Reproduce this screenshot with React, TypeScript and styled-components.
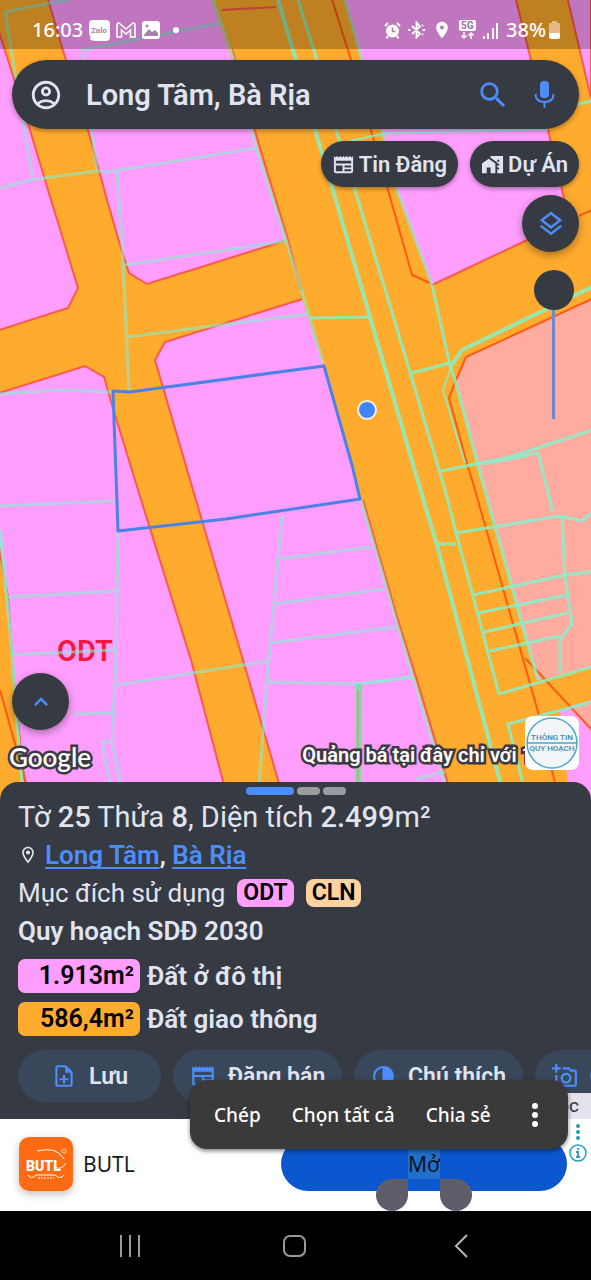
import React from "react";
import styled, { createGlobalStyle } from "styled-components";
import {
  MdContrast,
  MdKeyboardArrowUp,
  MdLocationOn,
  MdMapsHomeWork,
  MdNewspaper,
  MdOutlineAccountCircle,
  MdOutlineAddAPhoto,
  MdOutlineLayers,
  MdOutlineLocationOn,
  MdOutlineNoteAdd,
  MdSearch,
} from "react-icons/md";

const colors = {
  surface: "#363a43",
  text: "#e0e4f1",
  blue: "#4c8dfb",
  pink: "#ff9eff",
  orange: "#ffab2e",
  salmon: "#ffaba0",
  peach: "#ffd3a1",
  edge: "#fc5a4a",
};

const GlobalStyle = createGlobalStyle`
  *, *::before, *::after { box-sizing: border-box; }
  body { margin: 0; background: #000; font-family: Roboto, "Noto Sans", sans-serif; }
  button, input { font: inherit; color: inherit; border: 0; padding: 0; background: none; }
  p, h1, h2, ul { margin: 0; padding: 0; font-size: inherit; font-weight: inherit; }
  svg { display: block; flex: none; }
`;

const Page = styled.div`
  min-height: 100vh;
  display: flex;
  flex-direction: column;
  overflow: hidden;
`;

/* ---------- map ---------- */

const MapArea = styled.main`
  position: relative;
  flex: 1;
  min-height: 640px;
  display: flex;
  flex-direction: column;
  padding-bottom: 26px;
  background: ${colors.pink};
`;

const MapCanvas = styled.svg`
  position: absolute;
  inset: 0;
  width: 100%;
  height: 100%;
`;

const StatusBar = styled.div`
  position: relative;
  height: 49px;
  padding: 12px 31px 0 32px;
  display: flex;
  justify-content: space-between;
  align-items: flex-start;
  background: rgba(0, 0, 0, 0.25);
  color: #fff;
  font-family: "Noto Sans", sans-serif;
  font-size: 20px;
  font-weight: 500;
  line-height: 36px;
`;

const StatusGroup = styled.div<{ $gap: number }>`
  display: flex;
  align-items: center;
  gap: ${(p) => p.$gap}px;
  height: 36px;
`;

const SearchBar = styled.form`
  position: relative;
  display: flex;
  align-items: center;
  height: 69px;
  margin: 11px 12px 0;
  padding: 0 17px;
  border-radius: 35px;
  background: ${colors.surface};
  color: ${colors.text};
  box-shadow: 0 2px 5px rgba(0, 0, 0, 0.35);
`;

const SearchInput = styled.input`
  flex: 1;
  min-width: 0;
  margin-left: 23px;
  font-size: 29px;
  font-weight: 600;
  outline: none;
`;

const IconButton = styled.button<{ $accent?: boolean }>`
  display: flex;
  margin-left: ${(p) => (p.$accent ? 18 : 0)}px;
  color: ${(p) => (p.$accent ? colors.blue : colors.text)};
`;

const Chips = styled.div`
  position: relative;
  display: flex;
  justify-content: flex-end;
  gap: 12px;
  margin: 12px 12px 0;
`;

const Chip = styled.button`
  display: flex;
  align-items: center;
  gap: 4px;
  height: 46px;
  padding: 0 11px;
  border-radius: 23px;
  background: ${colors.surface};
  color: ${colors.text};
  font-size: 22px;
  font-weight: 600;
  box-shadow: 0 2px 4px rgba(0, 0, 0, 0.35);
`;

const MapTools = styled.div`
  position: relative;
  align-self: flex-end;
  display: flex;
  flex-direction: column;
  align-items: flex-end;
  gap: 18px;
  margin: 8px 12px 0;
`;

const RoundButton = styled.button`
  display: grid;
  place-items: center;
  width: 57px;
  height: 57px;
  border-radius: 50%;
  background: ${colors.surface};
  color: ${colors.blue};
  box-shadow: 0 3px 8px rgba(0, 0, 0, 0.35);
`;

const OpacitySlider = styled.input`
  appearance: none;
  writing-mode: vertical-lr;
  direction: rtl;
  width: 40px;
  height: 149px;
  margin: 0 6px 0 0;

  &::-webkit-slider-runnable-track {
    width: 3px;
    height: 100%;
    margin: 0 auto;
    background: #6f86d3;
  }
  &::-webkit-slider-thumb {
    appearance: none;
    width: 40px;
    height: 40px;
    margin-left: -18px;
    border-radius: 50%;
    background: ${colors.surface};
  }
`;

const MapFooter = styled.div`
  position: relative;
  display: flex;
  justify-content: space-between;
  align-items: flex-end;
  margin-top: auto;
  padding: 0 12px 0 9px;
`;

const FooterLeft = styled.div`
  display: flex;
  flex-direction: column;
  align-items: flex-start;
  gap: 10px;

  ${RoundButton} {
    margin-left: 3px;
  }
`;

const FooterRight = styled.div`
  display: flex;
  align-items: center;
  margin-bottom: 2px;
`;

const OutlinedText = styled.span<{ $size: number; $weight: number; $family: string }>`
  color: #fff;
  font-family: ${(p) => p.$family}, sans-serif;
  font-size: ${(p) => p.$size}px;
  font-weight: ${(p) => p.$weight};
  line-height: 34px;
  white-space: nowrap;
  -webkit-text-stroke: 5px #3c3a42;
  paint-order: stroke fill;
`;

const Promo = styled.div`
  margin: 24px -8px 0 0;
`;

const Badge = styled.div`
  position: relative;
  width: 54px;
  height: 54px;
  border-radius: 8px;
  background: #fff;
`;

/* ---------- parcel sheet ---------- */

const Sheet = styled.section`
  position: relative;
  margin-top: -18px;
  padding: 5px 0 17px;
  border-radius: 18px 18px 0 0;
  background: ${colors.surface};
  color: ${colors.text};
`;

const Pager = styled.div`
  display: flex;
  justify-content: center;
  gap: 3px;
  margin-bottom: 3px;
`;

const PagerBar = styled.span<{ $active?: boolean }>`
  width: ${(p) => (p.$active ? 48 : 23)}px;
  height: 8px;
  border-radius: 4px;
  background: ${(p) => (p.$active ? colors.blue : "#9c9c9e")};
`;

const Line = styled.div<{ $size: number; $bold?: boolean }>`
  display: flex;
  align-items: center;
  height: 38px;
  padding: 0 18px;
  font-size: ${(p) => p.$size}px;
  font-weight: ${(p) => (p.$bold ? 600 : 400)};
  white-space: pre;

  strong { font-weight: 500; }
`;

const Places = styled.span`
  margin-left: 7px;
`;

const PlaceLink = styled.a`
  color: ${colors.blue};
  text-decoration: underline;
  text-decoration-thickness: 2px;
  text-underline-offset: 3px;
  text-decoration-skip-ink: none;
`;

const Tag = styled.span<{ $color: string }>`
  height: 28px;
  margin-left: 12px;
  padding: 0 6px;
  border-radius: 8px;
  background: ${(p) => p.$color};
  color: #000;
  font-size: 23px;
  font-weight: 600;
  line-height: 28px;
`;

const AreaList = styled.ul`
  display: flex;
  flex-direction: column;
  gap: 9px;
  padding: 9px 18px 14px;
  list-style: none;
`;

const AreaItem = styled.li`
  display: flex;
  align-items: center;
  gap: 7px;
  font-size: 26px;
  font-weight: 600;
  line-height: 34px;
`;

const AreaValue = styled.span<{ $color: string }>`
  width: 122px;
  padding-right: 6px;
  border-radius: 7px;
  background: ${(p) => p.$color};
  color: #000;
  font-size: 25px;
  text-align: right;
`;

const Actions = styled.div`
  display: flex;
  gap: 12px;
  padding-left: 18px;
  overflow: hidden;
`;

const ActionButton = styled.button<{ $wide?: boolean }>`
  flex: none;
  display: flex;
  align-items: center;
  justify-content: center;
  gap: 12px;
  width: ${(p) => (p.$wide ? 169 : 143)}px;
  height: 52px;
  border-radius: 26px;
  background: #39475b;
  font-size: 23px;
  font-weight: 600;

  svg { color: ${colors.blue}; }
`;

const HalfDisc = styled(MdContrast)`
  transform: scaleX(-1);
`;

const ReadLabel = styled.span`
  position: absolute;
  right: 0;
  bottom: 0;
  width: 60px;
  height: 26px;
  padding-right: 12px;
  background: #e5e2ee;
  color: #333;
  font-size: 19px;
  line-height: 26px;
  text-align: right;
`;

/* ---------- advert ---------- */

const Ad = styled.aside`
  position: relative;
  display: flex;
  align-items: center;
  height: 92px;
  padding: 0 24px 2px 19px;
  background: #fff;
  color: #1b1b1f;
  font-family: "Noto Sans", sans-serif;
`;

const AdIcon = styled.svg`
  border-radius: 10px;
  box-shadow: 0 3px 8px rgba(0, 0, 0, 0.25);
`;

const AdName = styled.span`
  flex: 1;
  margin-left: 10px;
  font-size: 21px;
`;

const OpenButton = styled.button`
  flex: 0 1 286px;
  height: 54px;
  border-radius: 27px;
  background: #0b57d0;
  color: #10131c;
  font-size: 21px;
`;

const Selection = styled.span`
  position: relative;
  display: inline-block;
  line-height: 30px;
  background: #1f70cc;
`;

const Handle = styled.span<{ $side: "left" | "right" }>`
  position: absolute;
  top: 100%;
  ${(p) => (p.$side === "left" ? "right: 100%" : "left: 100%")};
  width: 32px;
  height: 32px;
  border-radius: ${(p) => (p.$side === "left" ? "50% 0 50% 50%" : "0 50% 50% 50%")};
  background: #5d5d6b;
`;

const AdMarks = styled.div`
  position: absolute;
  top: 4px;
  right: 4px;
  display: flex;
  flex-direction: column;
  align-items: center;
  gap: 3px;
`;

const ContextMenu = styled.div`
  position: absolute;
  right: 23px;
  bottom: 62px;
  display: flex;
  align-items: center;
  width: 378px;
  height: 69px;
  padding: 0 24px;
  border-radius: 17px;
  background: #3a3a3b;
  color: #fff;
  box-shadow: 0 2px 4px rgba(0, 0, 0, 0.5);
`;

const MenuItem = styled.button`
  margin-right: 31px;
  font-size: 19px;
  font-weight: 500;
  white-space: nowrap;
`;

const MenuMore = styled.button`
  margin-left: auto;
`;

/* ---------- system navigation ---------- */

const NavBar = styled.nav`
  position: relative;
  display: grid;
  grid-template-columns: repeat(3, 1fr);
  height: 69px;
  padding: 0 47px;
  background: #000;
`;

const NavButton = styled.button`
  display: grid;
  place-items: center;
`;

const teal = { fill: "none", stroke: "#7df5cf", strokeWidth: 3, strokeOpacity: 0.8 };
const faint = { fill: "none", stroke: "#84efd0", strokeWidth: 3, strokeOpacity: 0.6 };
const red = { fill: "none", stroke: "#ff5a14", strokeWidth: 2 };

function CadastralMap() {
  return (
    <MapCanvas viewBox="0 0 591 800" preserveAspectRatio="xMidYMin slice" role="img" aria-label="Bản đồ quy hoạch">
      <rect width="591" height="800" fill={colors.pink} />
      <g fill={colors.orange} stroke={colors.edge} strokeWidth="2">
        <path d="M-4 -4H47L65 57L88 130L107 200L120 245L129 273L147 284L265 247L290 239L312 296L165 342L155 360L193 490L243 660L285 804H229L191 660L138 490L112 405L104 377L85 366L-4 394V331L68 308L78 288L48 190L30 130L-4 22Z" />
        <path d="M-4 530L8 597L14 680L22 760L28 804H-4Z" />
        <path d="M210 -4L231 57L258 148L286 240L300 293L323 363L361 500L398 627L415 680L453 804H576L591 790V-4H568L592 100V-4Z" stroke="none" />
        <path d="M286 240L300 293" stroke={colors.orange} strokeWidth="4" />
        <path d="M363 500L400 627L417 680L454 804M222 10L276 7M232 49L260 148L288 240L301 290" fill="none" />
      </g>
      <path d="M344 -4L362 60L386 145L397 190L432 285L525 241L560 226L566 206L548 130L531 60L515 -4Z" fill={colors.pink} />
      <path d="M432 285L525 241L560 226L566 206L548 130L531 60L515 -4" fill="none" stroke={colors.edge} strokeWidth="2" />
      <path d="M567 -4L591 98V-4Z" fill={colors.pink} stroke={colors.edge} strokeWidth="2" />
      <path d="M591 299L466 357L456 380L482 480L510 580L525 635L538 680L591 667Z" fill={colors.salmon} />
      <path d="M560 711L591 702V804H570Z" fill={colors.pink} />
      <path d="M569 706L591 700V730Z" fill={colors.salmon} />

      <g {...red}>
        <path d="M331 -4L351 60L388 190L412 275L430 283M579 216L592 210" />
        <path d="M592 299L466 357L456 380L449 398L466 460L475 490L538 712L560 804M525 658L592 730M0 690L28 790" />
      </g>

      <g {...teal}>
        <path d="M278 0L296 60L315 130L333 190L370 317L419 485L437 545L505 800" strokeWidth="4" />
        <path d="M298 0L317 60L336 130L355 190L410 372L445 490L456 532L499 694L592 667" />
        <path d="M592 287L462 350L452 365" strokeWidth="4" />
        <path d="M452 365L443 390L465 463" strokeWidth="2" />
        <path d="M432 285L450 365L455 380L482 480L510 580L525 635L538 680" />
        <path d="M310 318L370 317M437 544H456M441 471L481 463M456 533L560 516L582 521L592 513" />
        <path d="M481 463L510 457L592 430M481 464L510 459L538 453L553 512M412 373L450 363" />
        <path d="M562 516L565 576L572 624L560 640V673" />
        <path d="M473 595L565 575L592 572M478 613L567 595M484 632L568 613M490 651L560 636" />
        <path d="M592 702L508 724L527 800" />
        <path d="M357 684L413 677M578 104L592 101M0 530L10 630L22 782" />
        <path d="M350 141L386 133L548 129" strokeWidth="2" />
      </g>
      <path d="M359 684L358 800" stroke="#7ddcaa" strokeWidth="6" />
      <path d="M358 690V800" stroke="#b9b07a" strokeWidth="2" />

      <text x="57" y="661" fill="#f5173b" fontFamily="Roboto, sans-serif" fontSize="29" fontWeight="600">ODT</text>

      <g {...faint}>
        <path d="M213 0L233 57L257 150L286 240L310 318L323 363M361 500L398 627L413 677L447 790" />
        <path d="M345 0L362 60L386 145L397 190L432 285" />
        <path d="M0 188L30 180L97 171L107 172L258 148M5 12L50 3L70 0M5 12L33 180M82 50L92 130L97 171M82 50L220 23" />
        <path d="M117 172L118 190L122 240L129 392M124 265L286 241M127 337L300 315L308 313M0 394L60 390L113 392" />
        <path d="M0 506L115 501M8 597L115 591M12 655L115 650M117 685L268 661M73 714L113 713" />
        <path d="M118 531L116 660L112 742L124 800M102 742H112M102 742L113 800" />
        <path d="M282 515L267 680L258 800M278 559L371 547M274 604L384 589M270 643L396 627M267 682L357 684M415 779L445 772" />
      </g>

      <path
        d="M113 391L130 392L324 366L352 465L360 499L226 519L118 531Z"
        fill="none"
        stroke="#4a82e8"
        strokeWidth="3"
        strokeLinejoin="round"
      />
      <circle cx="367" cy="410" r="9" fill="#4285f4" stroke="#f3efe8" strokeWidth="2" />
    </MapCanvas>
  );
}

function Status() {
  return (
    <StatusBar>
      <StatusGroup $gap={6}>
        <span>16:03</span>
        <svg width="21" height="21" viewBox="0 0 21 21">
          <path d="M4 0H17Q21 0 21 4V17Q21 21 17 21H7Q5 21 1 20Q2 18 1 16Q0 14 0 10V4Q0 0 4 0Z" fill="#fff" />
          <text x="2" y="13" fontFamily="Roboto, sans-serif" fontSize="8" fontWeight="700" fill="#b27bb5">Zalo</text>
        </svg>
        <svg width="20" height="16" viewBox="0 0 20 16" fill="none" stroke="#fff" strokeWidth="1.6">
          <path d="M1 3Q1 1 3 1L10 7L17 1Q19 1 19 3V15H14.500V8L10 12L5.500 8V15H1Z" />
        </svg>
        <svg width="18" height="18" viewBox="0 0 18 18">
          <rect width="18" height="18" rx="3" fill="#fff" />
          <path d="M2 14L7 8L10 11L13 9L16 12V15H2Z" fill="#a681ad" />
          <circle cx="5" cy="5" r="1.500" fill="#a681ad" />
        </svg>
        <svg width="20" height="6" viewBox="0 0 20 6">
          <circle cx="10" cy="3" r="3" fill="#fff" />
        </svg>
      </StatusGroup>
      <StatusGroup $gap={7}>
        <svg width="17" height="17" viewBox="0 0 17 17" fill="none" stroke="#fff">
          <circle cx="8.500" cy="9" r="6.500" fill="#fff" stroke="none" />
          <path d="M1 4L4 1M16 4L13 1M4 14L2.500 16.500M13 14L14.500 16.500" strokeWidth="2" />
          <path d="M8.500 5.500V9.500H11.500" stroke="#a87aa8" strokeWidth="1.500" />
        </svg>
        <svg width="17" height="18" viewBox="0 0 17 18" fill="none" stroke="#fff" strokeWidth="1.800">
          <path d="M4 5L12 12.500L8.500 16.500V1.500L12 5.500L4 13M0 9H2.500M14.500 9H17M14 5L15 4M14 13L15 14" />
        </svg>
        <MdLocationOn size={20} />
        <svg width="17" height="20" viewBox="0 0 17 20">
          <rect width="17" height="11" rx="2" fill="#fff" />
          <text x="2" y="9" fontFamily="Roboto, sans-serif" fontSize="10" fontWeight="700" fill="#9d6f9d">5G</text>
          <path d="M5 12V18M2.500 15.500L5 18L7.500 15.500M12 19V13M9.500 15.500L12 13L14.500 15.500" fill="none" stroke="#fff" strokeWidth="1.500" />
        </svg>
        <svg width="16" height="17" viewBox="0 0 16 17" fill="#fff">
          <path d="M0 14H2V17H0ZM4 11H6V17H4ZM9 6H11V17H9ZM13 1H15V17H13Z" />
        </svg>
        <StatusGroup $gap={3}>
          <span>38%</span>
          <svg width="11" height="18" viewBox="0 0 11 18">
            <path d="M3 0H8V2H10Q11 2 11 3V12H0V3Q0 2 1 2H3Z" fill="#e3b98c" />
            <path d="M0 12H11V16Q11 18 9 18H2Q0 18 0 16Z" fill="#fff" />
          </svg>
        </StatusGroup>
      </StatusGroup>
    </StatusBar>
  );
}

export default function App() {
  return (
    <>
      <GlobalStyle />
      <Page>
        <MapArea>
          <CadastralMap />
          <Status />
          <SearchBar role="search" onSubmit={(e) => e.preventDefault()}>
            <IconButton type="button" aria-label="Tài khoản">
              <MdOutlineAccountCircle size={34} />
            </IconButton>
            <SearchInput aria-label="Tìm kiếm" defaultValue="Long Tâm, Bà Rịa" />
            <IconButton $accent aria-label="Tìm">
              <MdSearch size={34} />
            </IconButton>
            <IconButton $accent type="button" aria-label="Giọng nói">
              <svg width="34" height="34" viewBox="0 0 34 34" fill="none" stroke="currentColor" strokeWidth="2">
                <rect x="12" y="3" width="9" height="17" rx="4" fill="currentColor" stroke="none" />
                <path d="M7.500 16Q7.500 24 16.500 24Q25.500 24 25.500 16M16.500 24V30" />
              </svg>
            </IconButton>
          </SearchBar>
          <Chips>
            <Chip>
              <MdNewspaper size={23} />
              Tin Đăng
            </Chip>
            <Chip>
              <MdMapsHomeWork size={23} />
              Dự Án
            </Chip>
          </Chips>
          <MapTools>
            <RoundButton aria-label="Lớp bản đồ">
              <MdOutlineLayers size={30} />
            </RoundButton>
            <OpacitySlider type="range" min={0} max={100} defaultValue={100} aria-label="Độ mờ" />
          </MapTools>
          <MapFooter>
            <FooterLeft>
              <RoundButton aria-label="Mở rộng">
                <MdKeyboardArrowUp size={28} />
              </RoundButton>
              <OutlinedText $size={26} $weight={600} $family="Lato">Google</OutlinedText>
            </FooterLeft>
            <FooterRight>
              <Promo>
                <OutlinedText $size={20} $weight={600} $family="Roboto">Quảng bá tại đây chỉ với 1</OutlinedText>
              </Promo>
              <Badge>
                <svg width="54" height="54" viewBox="0 0 54 54">
                  <circle cx="27" cy="27" r="25" fill="#f3f6f8" stroke="#4aa9c9" strokeWidth="1.500" />
                  <path d="M2 27H52" stroke="#4aa9c9" strokeWidth="1.500" />
                  <g fill="#3c87a8" fontFamily="Roboto, sans-serif" fontSize="8" fontWeight="500" textAnchor="middle">
                    <text x="27" y="24">THÔNG TIN</text>
                    <text x="27" y="35">QUY HOẠCH</text>
                  </g>
                </svg>
              </Badge>
            </FooterRight>
          </MapFooter>
        </MapArea>

        <Sheet>
          <Pager>
            <PagerBar $active />
            <PagerBar />
            <PagerBar />
          </Pager>
          <Line as="h1" $size={29}>
            Tờ <strong>25</strong> Thửa <strong>8</strong>, Diện tích <strong>2.499</strong>m²
          </Line>
          <Line $size={26} $bold>
            <MdOutlineLocationOn size={20} />
            <Places>
              <PlaceLink href="#long-tam">Long Tâm</PlaceLink>
              {", "}
              <PlaceLink href="#ba-ria">Bà Rịa</PlaceLink>
            </Places>
          </Line>
          <Line $size={26}>
            Mục đích sử dụng
            <Tag $color={colors.pink}>ODT</Tag>
            <Tag $color={colors.peach}>CLN</Tag>
          </Line>
          <Line as="h2" $size={26} $bold>Quy hoạch SDĐ 2030</Line>
          <AreaList>
            <AreaItem>
              <AreaValue $color={colors.pink}>1.913m²</AreaValue>
              Đất ở đô thị
            </AreaItem>
            <AreaItem>
              <AreaValue $color={colors.orange}>586,4m²</AreaValue>
              Đất giao thông
            </AreaItem>
          </AreaList>
          <Actions>
            <ActionButton>
              <MdOutlineNoteAdd size={26} />
              Lưu
            </ActionButton>
            <ActionButton $wide>
              <MdNewspaper size={26} />
              Đăng bán
            </ActionButton>
            <ActionButton $wide>
              <HalfDisc size={25} />
              Chú thích
            </ActionButton>
            <ActionButton $wide>
              <MdOutlineAddAPhoto size={26} />
              Chụp ảnh
            </ActionButton>
          </Actions>
          <ReadLabel>Đọc</ReadLabel>
        </Sheet>

        <Ad>
          <AdIcon width="54" height="54" viewBox="0 0 54 54">
            <rect width="54" height="54" fill="#ff6a13" />
            <text x="7" y="34" fill="#fff" fontFamily="Roboto, sans-serif" fontSize="14" fontWeight="900">BUTL</text>
            <path d="M18 14Q38 9 45 22M36 30Q42 34 47 26M9 38Q12 43 17 38H36Q41 43 45 38" fill="none" stroke="#fff" strokeWidth="1" />
            <circle cx="45" cy="14" r="2" fill="none" stroke="#fff" strokeWidth=".7" />
            <path d="M19 41H35" stroke="#ffd0b0" strokeWidth="1.500" strokeDasharray="2 1" />
          </AdIcon>
          <AdName>BUTL</AdName>
          <OpenButton>
            <Selection>
              Mở
              <Handle $side="left" />
              <Handle $side="right" />
            </Selection>
          </OpenButton>
          <AdMarks>
            <svg width="18" height="18" viewBox="0 0 18 18" fill="#20a0b8">
              <circle cx="9" cy="3" r="2" />
              <circle cx="9" cy="9" r="2" />
              <circle cx="9" cy="15" r="2" />
            </svg>
            <svg width="18" height="18" viewBox="0 0 18 18" fill="none" stroke="#20a0b8" strokeWidth="1.500">
              <circle cx="9" cy="9" r="8" />
              <path d="M9 4V6M7 8H9V13M7 13H11" strokeWidth="1.800" />
            </svg>
          </AdMarks>
          <ContextMenu role="menu">
            <MenuItem role="menuitem">Chép</MenuItem>
            <MenuItem role="menuitem">Chọn tất cả</MenuItem>
            <MenuItem role="menuitem">Chia sẻ</MenuItem>
            <MenuMore aria-label="Thêm">
              <svg width="18" height="24" viewBox="0 0 18 24" fill="#fff">
                <circle cx="9" cy="3" r="3" />
                <circle cx="9" cy="12" r="3" />
                <circle cx="9" cy="21" r="3" />
              </svg>
            </MenuMore>
          </ContextMenu>
        </Ad>

        <NavBar aria-label="Điều hướng">
          <NavButton aria-label="Gần đây">
            <svg width="24" height="24" viewBox="0 0 24 24" stroke="#9a9a9a" strokeWidth="2">
              <path d="M3 1V23M12 1V23M21 1V23" />
            </svg>
          </NavButton>
          <NavButton aria-label="Trang chủ">
            <svg width="24" height="24" viewBox="0 0 24 24" fill="none" stroke="#9a9a9a" strokeWidth="2">
              <rect x="1" y="2" width="21" height="20" rx="6" />
            </svg>
          </NavButton>
          <NavButton aria-label="Quay lại">
            <svg width="24" height="24" viewBox="0 0 24 24" fill="none" stroke="#b5b5b5" strokeWidth="2">
              <path d="M18 1L7 12L18 23" />
            </svg>
          </NavButton>
        </NavBar>
      </Page>
    </>
  );
}
